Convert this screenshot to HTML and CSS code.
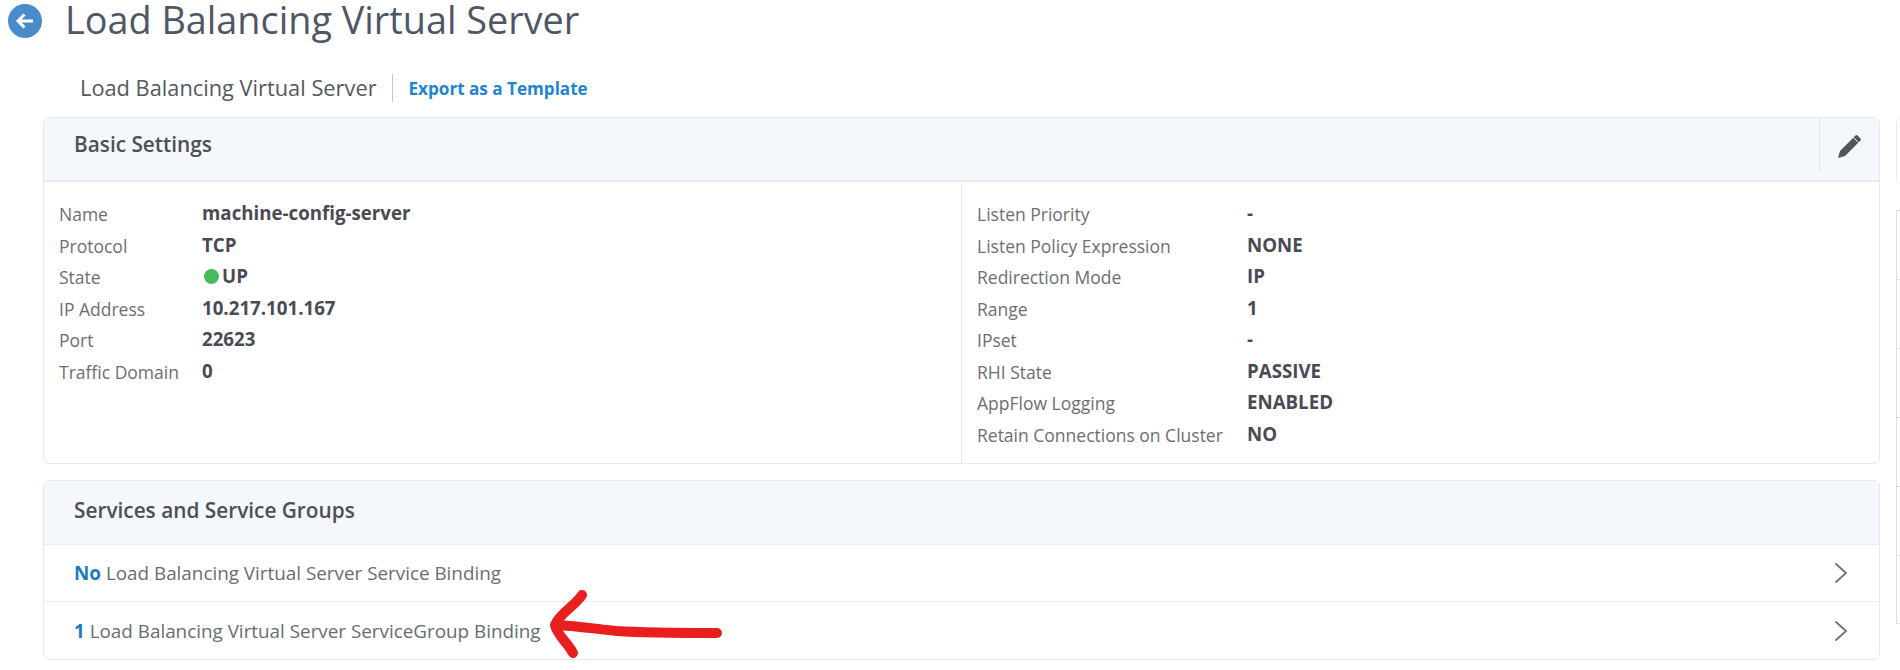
FILE: index.html
```html
<!DOCTYPE html>
<html lang="en">
<head>
<meta charset="utf-8">
<title>Load Balancing Virtual Server</title>
<link rel="stylesheet" href="styles.css">
</head>
<body>
<div class="page">
  <header class="title-bar">
    <svg class="back" viewBox="0 0 34 34" aria-hidden="true"><circle cx="17" cy="17" r="17" fill="#4a8bcb"/><path d="M25 17H10M16.500 10.500L10 17l6.500 6.500" fill="none" stroke="#fff" stroke-width="3"/></svg>
    <h1>Load Balancing Virtual Server</h1>
  </header>
  <div class="subbar">
    <span class="sub-name">Load Balancing Virtual Server</span>
    <a class="export">Export as a Template</a>
  </div>
  <div class="layout">
    <main class="main">
      <section class="card settings">
        <div class="card-head">
          <h2>Basic Settings</h2>
          <button class="edit" aria-label="Edit">
            <svg viewBox="0 0 26 26" width="26" height="26" aria-hidden="true"><path d="M1 25l2-7L18.500 2.500a1.500 1.500 0 0 1 2 0l3 3a1.500 1.500 0 0 1 0 2L8 23z" fill="#555"/><path d="M16.500 4.500l5 5" stroke="#f5f8fb" stroke-width="1"/></svg>
          </button>
        </div>
        <div class="columns">
          <dl class="props left">
            <div class="prop"><dt>Name</dt><dd>machine-config-server</dd></div>
            <div class="prop"><dt>Protocol</dt><dd>TCP</dd></div>
            <div class="prop"><dt>State</dt><dd><span class="dot"></span>UP</dd></div>
            <div class="prop"><dt>IP Address</dt><dd>10.217.101.167</dd></div>
            <div class="prop"><dt>Port</dt><dd>22623</dd></div>
            <div class="prop"><dt>Traffic Domain</dt><dd>0</dd></div>
          </dl>
          <dl class="props right">
            <div class="prop"><dt>Listen Priority</dt><dd>-</dd></div>
            <div class="prop"><dt>Listen Policy Expression</dt><dd>NONE</dd></div>
            <div class="prop"><dt>Redirection Mode</dt><dd>IP</dd></div>
            <div class="prop"><dt>Range</dt><dd>1</dd></div>
            <div class="prop"><dt>IPset</dt><dd>-</dd></div>
            <div class="prop"><dt>RHI State</dt><dd>PASSIVE</dd></div>
            <div class="prop"><dt>AppFlow Logging</dt><dd>ENABLED</dd></div>
            <div class="prop"><dt>Retain Connections on Cluster</dt><dd>NO</dd></div>
          </dl>
        </div>
      </section>
      <section class="card services">
        <div class="card-head short"><h2>Services and Service Groups</h2></div>
        <div class="bind"><span><b>No</b> Load Balancing Virtual Server Service Binding</span><svg class="chev" viewBox="0 0 14 22" aria-hidden="true"><path d="M1.500 1.500L12 11 1.500 20.500" fill="none" stroke="#707070" stroke-width="1.800"/></svg></div>
        <div class="bind"><span><b>1</b> Load Balancing Virtual Server ServiceGroup Binding</span><svg class="chev" viewBox="0 0 14 22" aria-hidden="true"><path d="M1.500 1.500L12 11 1.500 20.500" fill="none" stroke="#707070" stroke-width="1.800"/></svg></div>
      </section>
    </main>
    <aside class="side">
      <div class="side-top"></div>
      <div class="side-list">
        <div class="side-head"></div>
        <div class="side-row"></div>
        <div class="side-row"></div>
        <div class="side-row"></div>
        <div class="side-row"></div>
        <div class="side-row"></div>
      </div>
    </aside>
  </div>
</div>
<svg class="arrow" viewBox="0 0 180 80" aria-hidden="true"><path d="M170 44C130 44 100 44 70 42C50 40 30 37 9 36M35 6C27 18 13 24 8 36C10 46 21 54 26 64" fill="none" stroke="#e81f1f" stroke-width="10" stroke-linecap="round" stroke-linejoin="round"/></svg>
</body>
</html>
```
FILE: styles.css
```css
* { box-sizing: border-box; }
html, body { margin: 0; height: 670px; overflow: hidden; background: #fff; }
body { position: relative; font-family: "Open Sans", "Noto Sans", sans-serif; color: #56575c; }
.page { width: 1900px; }
.title-bar { display: flex; align-items: center; height: 40px; padding-left: 8px; }
.back { width: 34px; height: 34px; flex: none; margin-top: 1px; }
h1 { margin: 0 0 0 23px; font-size: 37.800px; font-weight: 400; color: #4f5666; line-height: 40px; white-space: nowrap; }
.subbar { display: flex; align-items: center; height: 28px; margin-top: 34px; padding-left: 80px; }
.sub-name { font-size: 21.800px; color: #55585f; padding-right: 15px; border-right: 1px solid #c8c8c8; line-height: 28px; }
.export { margin-left: 16px; font-size: 17.100px; font-weight: 700; color: #2284cf; }
.layout { display: flex; align-items: flex-start; margin-top: 15px; padding-left: 43px; gap: 16px; }
.main { flex: none; width: 1837px; display: flex; flex-direction: column; gap: 16px; }
.card { background: #fff; border: 1px solid #e6eaee; border-radius: 6px; overflow: hidden; }
.settings { height: 347px; }
.services { height: 180px; }
.card-head { display: flex; justify-content: space-between; height: 64px; background: #f4f7fb; border-bottom: 2px solid #e8ecf0; padding-left: 30px; }
.card-head.short { border-bottom-width: 1px; }
h2 { margin: 12px 0 0; font-size: 20.800px; font-weight: 600; line-height: 28px; color: #4e4f55; }
.short h2 { margin-top: 15px; }
.edit { width: 60px; height: 54px; padding: 0 0 0 16px; border: 0; border-left: 1px solid #e3e6ea; background: transparent; display: flex; align-items: center; }
.edit svg { margin-top: 2px; margin-left: 1px; }
.columns { display: flex; height: 281px; }
.props { margin: 0; padding-top: 17px; }
.left { width: 918px; padding-left: 15px; border-right: 1px solid #e6eaee; }
.right { flex: 1; padding-left: 15px; }
.prop { display: flex; height: 31.500px; line-height: 31.500px; }
dt { font-size: 17.500px; color: #6d6e73; white-space: nowrap; }
.left dt { width: 143px; }
.right dt { width: 270px; }
dd { margin: -2px 0 0; font-size: 18.700px; font-weight: 700; color: #4a4a55; white-space: nowrap; }
.dot { display: inline-block; width: 15px; height: 15px; margin: 0 3px 0 2px; border-radius: 50%; background: #45bb5d; vertical-align: -1px; }
.bind { display: flex; align-items: center; justify-content: space-between; height: 57px; padding: 0 30px; border-bottom: 1px solid #e8ecf0; font-size: 18.850px; color: #696c73; white-space: nowrap; }
.bind:last-child { border-bottom: 0; }
.bind b { color: #2278c0; font-weight: 700; }
.chev { width: 14px; height: 22px; margin-right: 1px; }
.side { flex: none; width: 60px; display: flex; flex-direction: column; gap: 25px; }
.side-top { height: 68px; border: 1px solid #e6eaee; border-radius: 6px 0 0 6px; }
.side-list { border: 1px solid #dcdfe2; height: 414px; }
.side-head { height: 68px; }
.side-row { height: 69px; border-top: 1px solid #dcdfe2; }
.arrow { position: absolute; left: 547px; top: 589px; width: 180px; height: 80px; }
```
